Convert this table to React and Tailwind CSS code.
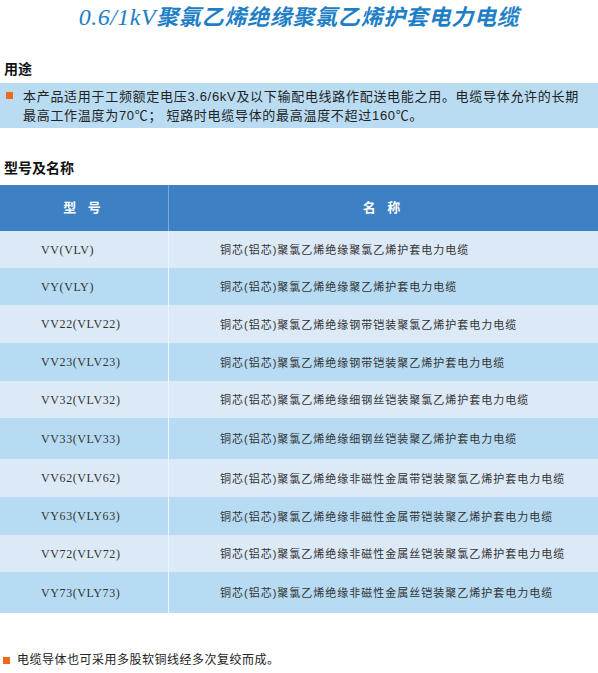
import React from 'react'

const rows = [
  { model: 'VV(VLV)', name: '铜芯(铝芯)聚氯乙烯绝缘聚氯乙烯护套电力电缆', h: 'h-[37px]', bg: 'bg-[#dce9f7]' },
  { model: 'VY(VLY)', name: '铜芯(铝芯)聚氯乙烯绝缘聚乙烯护套电力电缆', h: 'h-[37px]', bg: 'bg-[#b6dbf3]' },
  { model: 'VV22(VLV22)', name: '铜芯(铝芯)聚氯乙烯绝缘钢带铠装聚氯乙烯护套电力电缆', h: 'h-[38px]', bg: 'bg-[#dce9f7]' },
  { model: 'VV23(VLV23)', name: '铜芯(铝芯)聚氯乙烯绝缘钢带铠装聚乙烯护套电力电缆', h: 'h-[38px]', bg: 'bg-[#b6dbf3]' },
  { model: 'VV32(VLV32)', name: '铜芯(铝芯)聚氯乙烯绝缘细钢丝铠装聚氯乙烯护套电力电缆', h: 'h-[37px]', bg: 'bg-[#dce9f7]' },
  { model: 'VV33(VLV33)', name: '铜芯(铝芯)聚氯乙烯绝缘细钢丝铠装聚乙烯护套电力电缆', h: 'h-[41px]', bg: 'bg-[#b6dbf3]' },
  { model: 'VV62(VLV62)', name: '铜芯(铝芯)聚氯乙烯绝缘非磁性金属带铠装聚氯乙烯护套电力电缆', h: 'h-[38px]', bg: 'bg-[#dce9f7]' },
  { model: 'VY63(VLY63)', name: '铜芯(铝芯)聚氯乙烯绝缘非磁性金属带铠装聚乙烯护套电力电缆', h: 'h-[38px]', bg: 'bg-[#b6dbf3]' },
  { model: 'VV72(VLV72)', name: '铜芯(铝芯)聚氯乙烯绝缘非磁性金属丝铠装聚氯乙烯护套电力电缆', h: 'h-[37px]', bg: 'bg-[#dce9f7]' },
  { model: 'VY73(VLY73)', name: '铜芯(铝芯)聚氯乙烯绝缘非磁性金属丝铠装聚乙烯护套电力电缆', h: 'h-[41px]', bg: 'bg-[#b6dbf3]' },
]

const sans = "font-['Liberation_Sans','Noto_Sans_CJK_SC',sans-serif]"

const App = () => {
  return (
    <div className={`w-[598px] h-[673px] bg-white overflow-hidden text-[#222] ${sans}`}>
      <h1 className="h-[36px] pt-[3px] text-center text-[22px] leading-[28px] font-bold italic tracking-[0.7px] text-[#1e7fc7] font-['Liberation_Serif','Noto_Sans_CJK_SC',serif]">
        <span className="font-normal text-[24px] tracking-[0.5px]">0.6/1kV</span>聚氯乙烯绝缘聚氯乙烯护套电力电缆
      </h1>

      <h2 className="mt-[24px] pl-[4px] text-[14px] leading-[18px] font-bold text-[#111]">用途</h2>

      <div className="mt-[5px] h-[45px] bg-[#b9dcf3] flex pt-[4px] pl-[6px]">
        <span className="mt-[5px] w-[7px] h-[7px] bg-[#f0691d] shrink-0"></span>
        <p className="ml-[10px] text-[13px] leading-[19px] tracking-[0.7px] text-[#222]">
          本产品适用于工频额定电压3.6/6kV及以下输配电线路作配送电能之用。电缆导体允许的长期<br />
          最高工作温度为70℃； 短路时电缆导体的最高温度不超过160℃。
        </p>
      </div>

      <h2 className="mt-[31px] pl-[4px] text-[14px] leading-[18px] font-bold text-[#111]">型号及名称</h2>

      <div className="mt-[8px]">
        <div className="flex h-[46px] bg-[#3d80c4] text-white text-[13px] font-bold">
          <div className="w-[169px] border-r border-[#7aaadb] flex items-center justify-center tracking-[4px]">型 号</div>
          <div className="flex-1 flex items-center justify-center tracking-[4px]">名 称</div>
        </div>
        {rows.map((r) => (
          <div key={r.model} className={`flex ${r.h} ${r.bg}`}>
            <div className="w-[169px] border-r border-[#eef5fc] flex items-center pl-[41px] text-[12px] tracking-[0.6px] text-[#333] font-['Liberation_Serif',serif]">
              {r.model}
            </div>
            <div className="flex-1 flex items-center pl-[51px] pt-[2px] text-[11px] tracking-[1px] text-[#333]">
              {r.name}
            </div>
          </div>
        ))}
      </div>

      <div className="mt-[39px] flex items-center pl-[3px]">
        <span className="w-[7px] h-[7px] bg-[#f0691d] shrink-0"></span>
        <p className="ml-[7px] text-[12px] leading-[16px] tracking-[0.5px] text-[#222]">电缆导体也可采用多股软铜线经多次复绞而成。</p>
      </div>
    </div>
  )
}

export default App
